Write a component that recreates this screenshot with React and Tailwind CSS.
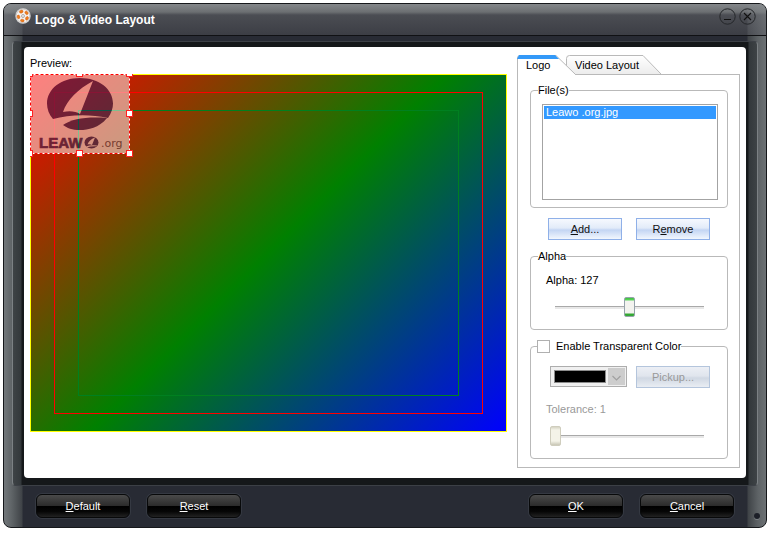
import React, { useState } from "react";

const GREY = "border-[#b9b9b9]";
const LEGEND = "h-4 text-[11px] leading-4";

function Key({ children }) {
  return <span className="underline">{children}</span>;
}

function DarkButton({ children }) {
  return (
    <button
      type="button"
      className="h-6 w-[94px] rounded-md border border-[#08090a] bg-[linear-gradient(#4a4a4a_0%,#2c2c2c_48%,#000000_52%,#060606_75%,#222222_100%)] text-[11px] leading-4 text-white shadow-[0_0_0_1px_#353942]"
    >
      {children}
    </button>
  );
}

function LightButton({ children, ...rest }) {
  return (
    <button
      type="button"
      className="h-[22px] w-[74px] border border-[#8fb0e8] bg-[linear-gradient(#f6f9fe_0%,#e2ebf9_45%,#c3d5f3_55%,#f2f7fe_100%)] text-[11px] leading-4 text-[#111] disabled:border-[#b4c5dc] disabled:bg-[linear-gradient(#eceff5_0%,#e0e5ed_45%,#d0d8e3_55%,#e9edf3_100%)] disabled:text-[#999]"
      {...rest}
    >
      {children}
    </button>
  );
}

function TitleIcon() {
  return (
    <svg viewBox="0 0 16 16" className="size-4 shrink-0" aria-hidden="true">
      <circle cx="8" cy="8" r="7.7" fill="#d9d8d8" />
      <circle cx="8" cy="8" r="6.8" fill="#f6f2ee" stroke="#b9b5b2" strokeWidth="0.5" />
      <g fill="#ef7d1b" stroke="#c65a1a" strokeWidth="0.4">
        <ellipse cx="6.300" cy="3.600" rx="1.900" ry="1.400" transform="rotate(-20 6.300 3.600)" />
        <ellipse cx="11.500" cy="4.900" rx="1.400" ry="1.900" transform="rotate(-40 11.500 4.900)" />
        <ellipse cx="12" cy="10.300" rx="1.400" ry="1.900" transform="rotate(30 12 10.300)" />
        <ellipse cx="7.300" cy="12.600" rx="1.900" ry="1.400" transform="rotate(10 7.300 12.600)" />
        <ellipse cx="3.500" cy="8.900" rx="1.400" ry="1.900" transform="rotate(-15 3.500 8.900)" />
      </g>
      <circle cx="8" cy="8" r="1.7" fill="#8b8480" />
      <circle cx="8" cy="8" r="0.9" fill="#fff" />
    </svg>
  );
}

function LogoMark() {
  return (
    <svg viewBox="0 0 100 80" className="block size-full" role="img" aria-label="Leawo .org">
      <path
        fill="#14286a"
        d="M50 4C31 4 17 15 17 29.500C17 35 19 40.500 23 45C38 41 58 39.500 78 44C81.500 39 83 34 83 29.500C83 15 69 4 50 4Z"
      />
      <path fill="#fff" d="M63 7C48 15 37 26 33 38C39 36.500 46 37 50 40Z" />
      <path fill="#14286a" d="M33 51C42 44.500 58 42.500 77 44C69 54 58 56 50 56C42 56 37 54 33 51Z" />
      <text
        x="9"
        y="74"
        fontSize="15"
        fontWeight="700"
        fill="#14286a"
        stroke="#14286a"
        strokeWidth="0.7"
        fontFamily="Liberation Sans, Arial, sans-serif"
      >
        LEAW
      </text>
      <ellipse cx="61.500" cy="68.500" rx="7" ry="6" fill="#14286a" />
      <path fill="#fff" d="M65 63.500C61 65 58.500 67.500 57.500 70.500C59 70 60.500 70 62 71ZM56 72.500Q61 70.500 67 71.500L66.500 72.300Q61 72 57 73.300Z" />
      <text x="71" y="73" fontSize="11" fill="#4a4a60" fontFamily="DejaVu Sans, Verdana, sans-serif">
        .org
      </text>
    </svg>
  );
}

const HANDLES = [
  "left-0 top-0",
  "left-1/2 top-0",
  "left-full top-0",
  "left-0 top-1/2",
  "left-full top-1/2",
  "left-0 top-full",
  "left-1/2 top-full",
  "left-full top-full",
];

function Preview({ alpha }) {
  return (
    <div className="relative aspect-[477/358] w-full overflow-hidden bg-[linear-gradient(135deg,#ff0000_0%,#008000_50%,#0000ff_100%)]">
      <div className="absolute inset-0 border border-[#ffff00]" />
      <div className="absolute inset-[5%] border border-[#ff0000]" />
      <div className="absolute inset-[10%] border border-[#008020]" />
      <div className="absolute left-0 top-0 h-20 w-[100px]">
        <div className="size-full bg-white" style={{ opacity: alpha / 255 }}>
          <LogoMark />
        </div>
        <svg className="absolute inset-0 size-full" aria-hidden="true">
          <rect x="0.500" y="0.500" width="99" height="79" fill="none" stroke="#fff" />
          <rect x="0.500" y="0.500" width="99" height="79" fill="none" stroke="#f00" strokeDasharray="3 2" />
        </svg>
        {HANDLES.map((place) => (
          <span
            key={place}
            className={"absolute -ml-1 -mt-1 size-[7px] border border-[#ff2020] bg-white " + place}
          />
        ))}
      </div>
    </div>
  );
}

function Tabs({ tab, onSelect }) {
  return (
    <div role="tablist" className="relative flex h-5 items-center">
      <svg className="absolute inset-0 h-5 w-full" aria-hidden="true">
        <defs>
          <linearGradient id="idle" x1="0" y1="0" x2="0" y2="1">
            <stop offset="0" stopColor="#fff" />
            <stop offset="1" stopColor="#ececec" />
          </linearGradient>
        </defs>
        <path d="M49.500 19.500V3.500Q49.500 0.500 52.500 0.500H126L144.500 19.500" fill="url(#idle)" stroke="#b9b9b9" />
        <path d="M0.500 20V3Q0.500 0.500 3 0.500H39L58.500 19.500V20Z" fill="#fff" />
        <path d="M0.500 20V3Q0.500 0.500 3 0.500H39L58.500 19.500" fill="none" stroke="#b9b9b9" />
        <path d="M0 4L2 0H38L42 4Z" fill="#3399f8" />
        <path d="M58 19.500H223" stroke="#b9b9b9" />
      </svg>
      <button
        type="button"
        role="tab"
        aria-selected={tab === "logo"}
        onClick={() => onSelect("logo")}
        className="relative ml-[9px] w-[49px] text-left text-[11px] leading-4"
      >
        Logo
      </button>
      <button
        type="button"
        role="tab"
        aria-selected={tab === "layout"}
        onClick={() => onSelect("layout")}
        className="relative text-[11px] leading-4"
      >
        Video Layout
      </button>
    </div>
  );
}

const TRACK =
  "block h-5 appearance-none bg-[linear-gradient(#a9a9a9,#a9a9a9),linear-gradient(#e8e8e8,#e8e8e8)] bg-[length:100%_1px,100%_2px] bg-[position:0_9px,0_10px] bg-no-repeat [&::-webkit-slider-thumb]:h-5 [&::-webkit-slider-thumb]:w-[11px] [&::-webkit-slider-thumb]:appearance-none [&::-webkit-slider-thumb]:rounded-[2px] [&::-webkit-slider-thumb]:border";

export default function App() {
  const [tab, setTab] = useState("logo");
  const [alpha, setAlpha] = useState(127);
  const [keyed, setKeyed] = useState(false);
  const [tolerance, setTolerance] = useState(1);

  return (
    <div className="bg-white pb-2 pl-[3px] pr-[5px] pt-[3px] font-['Liberation_Sans',Arial,sans-serif] text-[11px] leading-4 text-black">
      <main className="relative overflow-hidden rounded-lg border border-[#16181b] bg-[linear-gradient(90deg,#73787b_0px,#5e6366_8px,#3f4347_18px,#282b34_19px,#282b34_calc(100%-19px),#3f4347_calc(100%-18px),#5e6366_calc(100%-8px),#6c7174_100%)]">
        <header className="flex h-8 items-center border-b border-[#101114] bg-[linear-gradient(90deg,#8a8f9280_0px,#8a8f9230_18px,transparent_19px,transparent_calc(100%-19px),#8a8f9230_calc(100%-18px),#8a8f9280_100%),linear-gradient(#84878a_0px,#6c6f72_8px,#4b4d53_11px,#3c3e45_100%)] pl-[11px] pr-[10px]">
          <span className="flex h-full items-start pt-1">
            <TitleIcon />
          </span>
          <h1 className="ml-1 flex-1 text-[12px] font-bold leading-4 text-white">Logo &amp; Video Layout</h1>
          <div className="flex h-full items-start gap-[3px] pt-1 text-[#111]">
            <button type="button" aria-label="Minimize" className="size-[17px]">
              <svg viewBox="0 0 17 17" className="block size-full" fill="none" stroke="currentColor">
                <circle cx="8.500" cy="8.500" r="7.700" stroke="#25272a" />
                <path d="M5 11.500h7" strokeWidth="1.200" />
              </svg>
            </button>
            <button type="button" aria-label="Close" className="size-[17px]">
              <svg viewBox="0 0 17 17" className="block size-full" fill="none" stroke="currentColor">
                <circle cx="8.500" cy="8.500" r="7.700" stroke="#25272a" />
                <path d="M5 5l7 7M12 5l-7 7" strokeWidth="1.100" />
              </svg>
            </button>
          </div>
        </header>

        <div className="mx-2 mt-[5px] rounded-sm border border-x-[#7c8184] border-y-[#3c4046] bg-[linear-gradient(90deg,#3e4346_0px,#33383b_8px,#15181a_9px,#15181a_calc(100%-9px),#33383b_calc(100%-8px),#3e4346_100%)] px-[11px] pb-[7px] pt-[5px]">
          <div className="flex gap-[10px] rounded-sm bg-white px-[6px] pb-[10px] pt-2">
            <section className="min-w-0 flex-1">
              <h2 className="mb-[3px] h-4 text-[11px] leading-4">Preview:</h2>
              <Preview alpha={alpha} />
            </section>

            <section className="w-[223px] shrink-0">
              <Tabs tab={tab} onSelect={setTab} />
              <div className={"border border-t-0 pb-2 pl-3 pr-[11px] pt-[7px] " + GREY}>
                <fieldset className={"h-[126px] rounded border pb-[7px] pl-[11px] pr-[9px] " + GREY}>
                  <legend className={"-ml-1 " + LEGEND}>File(s)</legend>
                  <select
                    size={6}
                    defaultValue="Leawo .org.jpg"
                    aria-label="Files"
                    className="mt-[6px] block h-24 w-full overflow-hidden rounded-none border border-[#a3a3a3] bg-white p-px"
                  >
                    <option className="bg-[#3399ff] bg-[linear-gradient(#3399ff,#3399ff)] p-0 pl-0.5 text-[11px] leading-[13px] text-white checked:text-white">
                      Leawo .org.jpg
                    </option>
                  </select>
                </fieldset>

                <div className="mt-[10px] flex justify-center gap-[14px]">
                  <LightButton>
                    <Key>A</Key>dd...
                  </LightButton>
                  <LightButton>
                    R<Key>e</Key>move
                  </LightButton>
                </div>

                <fieldset className={"mt-2 rounded border pb-3 pl-[15px] pr-[23px] " + GREY}>
                  <legend className={"-ml-2 " + LEGEND}>Alpha</legend>
                  <label htmlFor="alpha" className="mt-2 block leading-4">
                    Alpha: {alpha}
                  </label>
                  <div className="mt-[9px] pl-[9px]">
                    <input
                      id="alpha"
                      type="range"
                      min="0"
                      max="255"
                      value={alpha}
                      onChange={(e) => setAlpha(Number(e.target.value))}
                      className={
                        TRACK +
                        " w-full [&::-webkit-slider-thumb]:border-[#96a3ab] [&::-webkit-slider-thumb]:bg-[linear-gradient(#3fbf3f_0px,#5bd65b_2px,#f3f3ef_3px,#f3f3ef_15px,#34a834_16px,#34a834_100%)]"
                      }
                    />
                  </div>
                </fieldset>

                <fieldset className={"mt-2 rounded border pb-3 pl-[15px] pr-[17px] " + GREY}>
                  <legend className={"-ml-[9px] " + LEGEND}>
                    <label className="flex items-center gap-[6px]">
                      <input
                        type="checkbox"
                        checked={keyed}
                        onChange={(e) => setKeyed(e.target.checked)}
                        className="size-[13px] appearance-none border border-[#b0b0b0] bg-white checked:bg-[#3399ff]"
                      />
                      Enable Transparent Color
                    </label>
                  </legend>
                  <div className="mt-3 flex justify-between pl-1">
                    <div className="relative h-[21px] w-[77px]">
                      <select
                        disabled={!keyed}
                        aria-label="Transparent color"
                        className="block size-full appearance-none rounded-none border border-[#adadad] bg-[#f0f0f0] text-transparent"
                      >
                        <option aria-label="Black" />
                      </select>
                      <span className="pointer-events-none absolute left-1 top-1 h-[13px] w-[52px] border border-[#8c8c8c] bg-black" />
                      <svg
                        className="pointer-events-none absolute right-0.5 top-0.5 size-[17px] bg-[#cdcdcd]"
                        viewBox="0 0 17 17"
                        fill="none"
                        stroke="#a0a0a0"
                        strokeWidth="1.200"
                        aria-hidden="true"
                      >
                        <path d="M4.500 8l4 4l4-4" />
                      </svg>
                    </div>
                    <LightButton disabled={!keyed}>Pickup...</LightButton>
                  </div>
                  <label htmlFor="tolerance" className="mt-[13px] block leading-4 text-[#999]">
                    Tolerance: {tolerance}
                  </label>
                  <div className="mt-[9px] pl-1 pr-[6px]">
                    <input
                      id="tolerance"
                      type="range"
                      min="1"
                      max="100"
                      value={tolerance}
                      disabled={!keyed}
                      onChange={(e) => setTolerance(Number(e.target.value))}
                      className={
                        TRACK +
                        " w-full [&::-webkit-slider-thumb]:border-[#cfcdbd] [&::-webkit-slider-thumb]:bg-[linear-gradient(#d6d4c4_0px,#f4f3e8_3px,#f4f3e8_14px,#c9c7b6_100%)]"
                      }
                    />
                  </div>
                </fieldset>
              </div>
            </section>
          </div>
        </div>

        <footer className="flex items-center justify-between px-8 pb-[9px] pt-2">
          <div className="flex gap-[17px]">
            <DarkButton>
              <Key>D</Key>efault
            </DarkButton>
            <DarkButton>
              <Key>R</Key>eset
            </DarkButton>
          </div>
          <div className="flex gap-[17px]">
            <DarkButton>
              <Key>O</Key>K
            </DarkButton>
            <DarkButton>
              <Key>C</Key>ancel
            </DarkButton>
          </div>
        </footer>
        <span className="absolute bottom-2 right-[6px] size-[6px] rounded-full bg-[#1c1f28] shadow-[0_1px_0_#7c8184]" />
      </main>
    </div>
  );
}
